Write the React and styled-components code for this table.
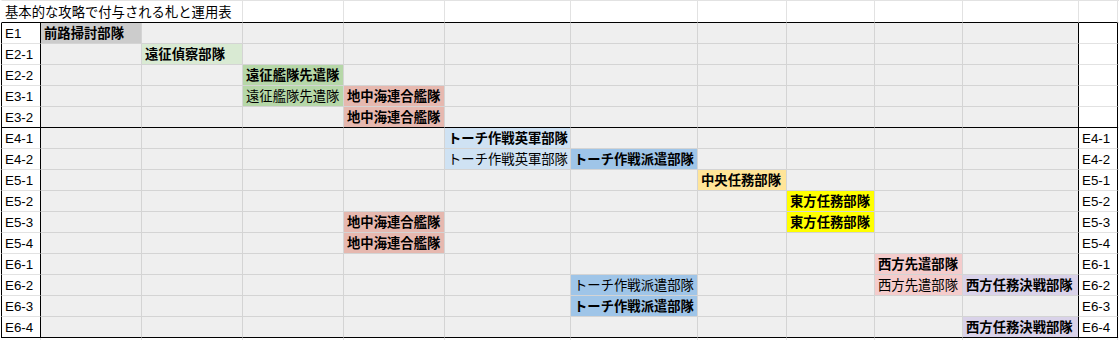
import React from "react";
import styled, { createGlobalStyle } from "styled-components";

const COLS = [40, 101, 101, 101, 101, 126, 127, 89, 88, 88, 116, 39, 40];
const GRID_IN = "#d4d4d4";
const GRID_OUT = "#e2e2e2";
const BLACK = "#000";

const UNITS = [
  null,
  { name: "前路掃討部隊", bg: "#cccccc" },
  { name: "遠征偵察部隊", bg: "#d9ead3" },
  { name: "遠征艦隊先遣隊", bg: "#b6d7a8" },
  { name: "地中海連合艦隊", bg: "#e6b8af" },
  { name: "トーチ作戦英軍部隊", bg: "#cfe2f3" },
  { name: "トーチ作戦派遣部隊", bg: "#9fc5e8" },
  { name: "中央任務部隊", bg: "#ffe599" },
  { name: "東方任務部隊", bg: "#ffff00" },
  { name: "西方先遣部隊", bg: "#f4cccc" },
  { name: "西方任務決戦部隊", bg: "#d9d2e9" },
];

// cells: column index -> bold (true) or regular (false)
const ROWS = [
  { label: "E1", cells: { 1: true } },
  { label: "E2-1", cells: { 2: true } },
  { label: "E2-2", cells: { 3: true } },
  { label: "E3-1", cells: { 3: false, 4: true } },
  { label: "E3-2", cells: { 4: true }, end: true },
  { label: "E4-1", cells: { 5: true }, right: true },
  { label: "E4-2", cells: { 5: false, 6: true }, right: true },
  { label: "E5-1", cells: { 7: true }, right: true },
  { label: "E5-2", cells: { 8: true }, right: true },
  { label: "E5-3", cells: { 4: true, 8: true }, right: true },
  { label: "E5-4", cells: { 4: true }, right: true },
  { label: "E6-1", cells: { 9: true }, right: true },
  { label: "E6-2", cells: { 6: false, 9: false, 10: true }, right: true },
  { label: "E6-3", cells: { 6: true }, right: true },
  { label: "E6-4", cells: { 10: true }, right: true, end: true },
];

const GlobalStyle = createGlobalStyle`
  html, body {
    margin: 0;
    padding: 0;
    background: #fff;
    overflow: hidden;
  }
`;

const Sheet = styled.div`
  display: grid;
  grid-template-columns: ${COLS.map((w) => `${w}px`).join(" ")};
  grid-template-rows: 23px repeat(15, 21px) 2px;
  margin-left: 1px;
  font-family: "Liberation Sans", "Noto Sans CJK JP", sans-serif;
  font-size: 13.33px;
  line-height: 15px;
  color: #000;
`;

const Cell = styled.div`
  box-sizing: border-box;
  display: flex;
  align-items: flex-end;
  padding: 0 3px 2px;
  white-space: nowrap;
  overflow: visible;
  background: ${(p) => p.$bg || "#fff"};
  font-weight: ${(p) => (p.$bold ? 700 : 400)};
  border-right: 1px solid ${(p) => p.$r || GRID_OUT};
  border-bottom: 1px solid ${(p) => p.$b || GRID_OUT};
  border-left: ${(p) => (p.$l ? `1px solid ${p.$l}` : "none")};
  border-top: ${(p) => (p.$t ? `1px solid ${p.$t}` : "none")};
`;

const Title = styled(Cell)`
  grid-column: span 3;
`;

const Filler = styled.div`
  box-sizing: border-box;
  background: #fff;
  border-right: 1px solid ${GRID_OUT};
`;

function TitleRow() {
  return (
    <>
      <Title $t={GRID_OUT} $l="#fff" $b={BLACK}>
        基本的な攻略で付与される札と運用表
      </Title>
      {COLS.slice(3).map((_, i) => (
        <Cell key={i} $t={GRID_OUT} $b={i < 9 ? BLACK : GRID_OUT} />
      ))}
    </>
  );
}

function DataRow({ row }) {
  const bottom = row.end ? BLACK : null;
  return (
    <>
      <Cell $l={BLACK} $r={BLACK} $b={bottom}>
        {row.label}
      </Cell>
      {UNITS.slice(1).map((unit, i) => {
        const col = i + 1;
        const has = col in row.cells;
        return (
          <Cell
            key={col}
            $bg={has ? unit.bg : "#efefef"}
            $bold={has && row.cells[col]}
            $r={col === 10 ? BLACK : GRID_IN}
            $b={bottom || GRID_IN}
          >
            {has ? unit.name : null}
          </Cell>
        );
      })}
      <Cell $r={BLACK} $b={bottom}>
        {row.right ? row.label : null}
      </Cell>
      <Cell />
    </>
  );
}

export default function App() {
  return (
    <>
      <GlobalStyle />
      <Sheet>
        <TitleRow />
        {ROWS.map((row) => (
          <DataRow key={row.label} row={row} />
        ))}
        {COLS.map((_, i) => (
          <Filler key={i} />
        ))}
      </Sheet>
    </>
  );
}
